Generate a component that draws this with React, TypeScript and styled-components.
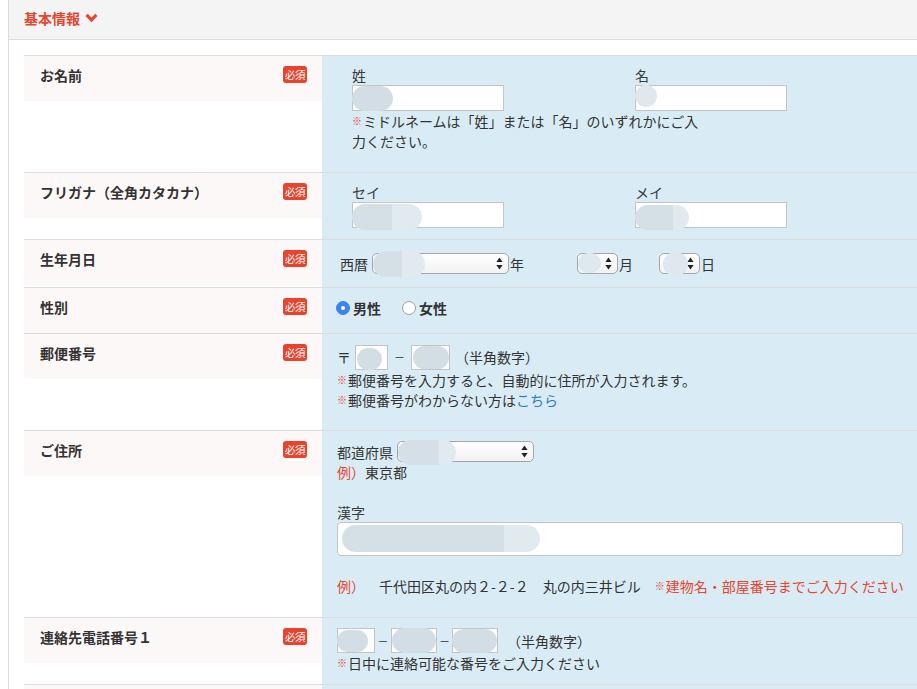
import React from 'react'
import styled, { createGlobalStyle } from 'styled-components'

const RED = '#e6452f'

const GlobalStyle = createGlobalStyle`
  * { box-sizing: border-box; }
  html, body { overflow: hidden; }
  body {
    margin: 0;
    background: #fff;
    color: #333;
    font-family: 'Noto Sans CJK JP', 'Noto Sans', sans-serif;
    font-size: 14px;
    line-height: 20px;
    text-spacing-trim: space-all;
  }
`

const Blur: React.FC<{ l: number; t: number; w: number; h: number; split?: number; light?: boolean }> = ({
  l,
  t,
  w,
  h,
  split,
  light,
}) => (
  <Blot
    style={{
      left: l,
      top: t,
      width: w,
      height: h,
      background: split
        ? `linear-gradient(90deg, #d5e0e6 ${split}%, #e1eaef ${split}%)`
        : light
        ? '#dfe8ed'
        : '#d3dee4',
    }}
  />
)

const Arrows = () => (
  <ArrowIcon width='7' height='13' viewBox='0 0 7 13'>
    <path d='M3.5 0.5 L6.6 5 H0.4 Z' fill='#222' />
    <path d='M0.4 8 H6.6 L3.5 12.5 Z' fill='#222' />
  </ArrowIcon>
)

const Required = () => <Badge>必須</Badge>

const Label: React.FC<{ text: string; required?: boolean }> = ({ text, required = true }) => (
  <LabelCell>
    <LabelBox>
      <LabelText>{text}</LabelText>
      {required && <Required />}
    </LabelBox>
  </LabelCell>
)

const App = () => {
  return (
    <>
      <GlobalStyle />
      <Page>
        <Head>
          <HeadTitle>基本情報</HeadTitle>
          <svg width='13' height='10' viewBox='0 0 13 10'>
            <path d='M1.6 1.8 L6.5 6.9 L11.4 1.8' fill='none' stroke={RED} strokeWidth='3.2' />
          </svg>
        </Head>

        <Body>
          {/* name */}
          <Row>
            <Label text='お名前' />
            <ValueCell $pad='9px 0 21px 30px'>
              <NameGrid>
                <NameCol>
                  <FieldLabel>姓</FieldLabel>
                  <Field>
                    <TextInput $w={152} $h={26} />
                    <Blur l={0} t={1} w={41} h={25} />
                  </Field>
                </NameCol>
                <NameCol>
                  <FieldLabel>名</FieldLabel>
                  <Field>
                    <TextInput $w={152} $h={26} />
                    <Blur l={0} t={0} w={22} h={22} light />
                  </Field>
                </NameCol>
              </NameGrid>
              <Note $w={352}>
                <Mark>※</Mark>ミドルネームは「姓」または「名」のいずれかにご入力ください。
              </Note>
            </ValueCell>
          </Row>

          {/* kana */}
          <Row>
            <Label text='フリガナ（全角カタカナ）' />
            <ValueCell $pad='9px 0 11px 30px'>
              <NameGrid>
                <NameCol>
                  <FieldLabel>セイ</FieldLabel>
                  <Field>
                    <TextInput $w={152} $h={26} />
                    <Blur l={0} t={2} w={70} h={26} split={57} />
                  </Field>
                </NameCol>
                <NameCol>
                  <FieldLabel>メイ</FieldLabel>
                  <Field>
                    <TextInput $w={152} $h={26} />
                    <Blur l={0} t={3} w={54} h={25} split={70} />
                  </Field>
                </NameCol>
              </NameGrid>
            </ValueCell>
          </Row>

          {/* birthday */}
          <Row>
            <Label text='生年月日' />
            <ValueCell $pad='10px 0 10px 18px'>
              <Line $h={27}>
                <span>西暦</span>
                <Field $ml={4}>
                  <Select $w={137}>
                    <Arrows />
                  </Select>
                  <Blur l={1} t={-2} w={52} h={26} split={55} />
                </Field>
                <Suffix>年</Suffix>
                <Field $ml={53}>
                  <Select $w={41}>
                    <Arrows />
                  </Select>
                  <Blur l={1} t={0} w={23} h={20} light />
                </Field>
                <Suffix>月</Suffix>
                <Field $ml={26}>
                  <Select $w={41}>
                    <Arrows />
                  </Select>
                  <Blur l={4} t={-1} w={25} h={24} light />
                </Field>
                <Suffix>日</Suffix>
              </Line>
            </ValueCell>
          </Row>

          {/* gender */}
          <Row>
            <Label text='性別' />
            <ValueCell $pad='10px 0 10px 14px'>
              <Line $h={20}>
                <Radio $checked />
                <RadioText>男性</RadioText>
                <Radio $gap={21} />
                <RadioText>女性</RadioText>
              </Line>
            </ValueCell>
          </Row>

          {/* postal */}
          <Row>
            <Label text='郵便番号' />
            <ValueCell $pad='10px 0 20px 15px'>
              <Line $h={26}>
                <span>〒</span>
                <Field $ml={4}>
                  <TextInput $w={33} $h={25} />
                  <Blur l={2} t={3} w={25} h={22} />
                </Field>
                <Dash $w={23}>－</Dash>
                <Field>
                  <TextInput $w={39} $h={25} />
                  <Blur l={2} t={1} w={36} h={23} />
                </Field>
                <Hint $ml={5}>（半角数字）</Hint>
              </Line>
              <Note>
                <Mark>※</Mark>郵便番号を入力すると、自動的に住所が入力されます。
              </Note>
              <Note>
                <Mark>※</Mark>郵便番号がわからない方は<Link href='#'>こちら</Link>
              </Note>
            </ValueCell>
          </Row>

          {/* address */}
          <Row>
            <Label text='ご住所' />
            <ValueCell $pad='10px 0 21px 15px'>
              <Line $h={21}>
                <span>都道府県</span>
                <Field $ml={4}>
                  <Select $w={137}>
                    <Arrows />
                  </Select>
                  <Blur l={1} t={-1} w={58} h={25} split={70} />
                </Field>
              </Line>
              <Note>
                <Red>例）</Red>東京都
              </Note>
              <FieldLabel $mt={20}>漢字</FieldLabel>
              <WideField>
                <TextInput $h={34} $round />
                <Blur l={5} t={3} w={198} h={27} split={82} />
              </WideField>
              <Note $mt={20}>
                <Red>例）</Red>
                {'　千代田区丸の内２-２-２　丸の内三井ビル　'}
                <Red>
                  <Mark>※</Mark>建物名・部屋番号までご入力ください
                </Red>
              </Note>
            </ValueCell>
          </Row>

          {/* phone */}
          <Row $last>
            <Label text='連絡先電話番号１' />
            <ValueCell $pad='10px 0 11px 15px'>
              <Line $h={25}>
                <Field>
                  <TextInput $w={38} $h={25} />
                  <Blur l={0} t={2} w={31} h={22} />
                </Field>
                <Dash $w={16}>－</Dash>
                <Field>
                  <TextInput $w={46} $h={25} />
                  <Blur l={1} t={0} w={44} h={25} />
                </Field>
                <Dash $w={15}>－</Dash>
                <Field>
                  <TextInput $w={46} $h={25} />
                  <Blur l={0} t={1} w={45} h={24} />
                </Field>
                <Hint $ml={9}>（半角数字）</Hint>
              </Line>
              <Note>
                <Mark>※</Mark>日中に連絡可能な番号をご入力ください
              </Note>
            </ValueCell>
          </Row>
          <NextRow />
        </Body>
      </Page>
    </>
  )
}

export default App

const Page = styled.div`
  margin-left: 8px;
  border-left: 1px solid #dcdcdc;
  min-height: 100vh;
`

const Head = styled.div`
  display: flex;
  align-items: center;
  gap: 5px;
  height: 40px;
  padding: 0 0 3px 15px;
  background: #f4f4f4;
  border-bottom: 1px solid #dcdcdc;
`

const HeadTitle = styled.h2`
  margin: 0;
  color: ${RED};
  font-size: 14px;
  font-weight: 700;
  line-height: 20px;
`

const Body = styled.div`
  padding: 15px 0 0 15px;
`

const Row = styled.div<{ $last?: boolean }>`
  display: grid;
  grid-template-columns: 298px 1fr;
  border-top: 1px solid #dcdcdc;
  ${(p) => (p.$last ? 'border-bottom: 1px solid #dcdcdc;' : '')}
`

/* start of the next row, cut by the bottom of the window */
const NextRow = styled.div`
  display: grid;
  grid-template-columns: 298px 1fr;
  height: 45px;
  background: linear-gradient(90deg, #fdf8f8 298px, #d9ecf5 298px);
`

const LabelCell = styled.div`
  background: #fff;
`

const LabelBox = styled.div`
  display: flex;
  justify-content: space-between;
  align-items: flex-start;
  height: 45px;
  padding: 9px 15px 0 16px;
  background: #fdf8f8;
`

const LabelText = styled.span`
  font-size: 14px;
  font-weight: 700;
  color: #333;
`

const Badge = styled.span`
  display: inline-block;
  width: 24px;
  height: 17px;
  margin-top: 1px;
  border-radius: 3px;
  background: #e8432d;
  color: #fff;
  font-size: 10.5px;
  line-height: 17px;
  text-align: center;
  letter-spacing: -0.5px;
`

const ValueCell = styled.div<{ $pad: string }>`
  background: #d9ecf5;
  padding: ${(p) => p.$pad};
  color: #333;
`

const NameGrid = styled.div`
  display: flex;
`

const NameCol = styled.div`
  display: flex;
  flex-direction: column;
  align-items: flex-start;
  width: 283px;
`

const FieldLabel = styled.div<{ $mt?: number }>`
  margin-top: ${(p) => p.$mt || 0}px;
  height: 20px;
  color: #3a3a3a;
`

const Field = styled.span<{ $ml?: number }>`
  position: relative;
  display: inline-block;
  flex: none;
  margin-left: ${(p) => p.$ml || 0}px;
`

const WideField = styled.div`
  position: relative;
  margin-right: 14px;
`

const TextInput = styled.input<{ $w?: number; $h: number; $round?: boolean }>`
  display: block;
  width: ${(p) => (p.$w ? `${p.$w}px` : '100%')};
  height: ${(p) => p.$h}px;
  margin: 0;
  padding: 0 4px;
  border: 1px solid #c4c4c4;
  border-radius: ${(p) => (p.$round ? '4px' : '0')};
  background: #fff;
  font: inherit;
  outline: none;
`

const Blot = styled.span`
  position: absolute;
  border-radius: 999px;
  pointer-events: none;
`

const Select = styled.div<{ $w: number }>`
  position: relative;
  width: ${(p) => p.$w}px;
  height: 21px;
  border: 1px solid #a6a6a6;
  border-radius: 5px;
  background: linear-gradient(#fefefe, #f2f2f2);
`

const ArrowIcon = styled.svg`
  position: absolute;
  right: 5px;
  top: 3px;
`

const Line = styled.div<{ $h: number }>`
  display: flex;
  align-items: center;
  height: ${(p) => p.$h}px;
  white-space: nowrap;
`

const Suffix = styled.span`
  margin-left: 1px;
`

const Dash = styled.span<{ $w: number }>`
  width: ${(p) => p.$w}px;
  text-align: center;
  font-size: 11px;
  color: #333;
`

const Hint = styled.span<{ $ml: number }>`
  margin-left: ${(p) => p.$ml}px;
`

const Note = styled.div<{ $w?: number; $mt?: number }>`
  width: ${(p) => (p.$w ? `${p.$w}px` : 'auto')};
  margin-top: ${(p) => p.$mt || 0}px;
  line-height: 20px;
`

const Mark = styled.span`
  display: inline-block;
  width: 11px;
  height: 20px;
  vertical-align: top;
  color: #e83a2a;
  font-size: 10px;
  font-weight: 700;
  line-height: 20px;
`

const Red = styled.span`
  color: ${RED};
`

const Link = styled.a`
  color: #2b7cc4;
  text-decoration: none;
`

const Radio = styled.span<{ $checked?: boolean; $gap?: number }>`
  position: relative;
  display: inline-block;
  width: 14px;
  height: 14px;
  margin: 0 3px 0 ${(p) => p.$gap || 0}px;
  border-radius: 50%;
  border: 1px solid ${(p) => (p.$checked ? '#3a82f6' : '#9d9d9d')};
  background: ${(p) => (p.$checked ? '#3a82f6' : '#fff')};
  &::after {
    content: '';
    display: ${(p) => (p.$checked ? 'block' : 'none')};
    position: absolute;
    left: 4px;
    top: 4px;
    width: 4px;
    height: 4px;
    border-radius: 50%;
    background: #fff;
  }
`

const RadioText = styled.span`
  font-weight: 700;
  color: #333;
`
